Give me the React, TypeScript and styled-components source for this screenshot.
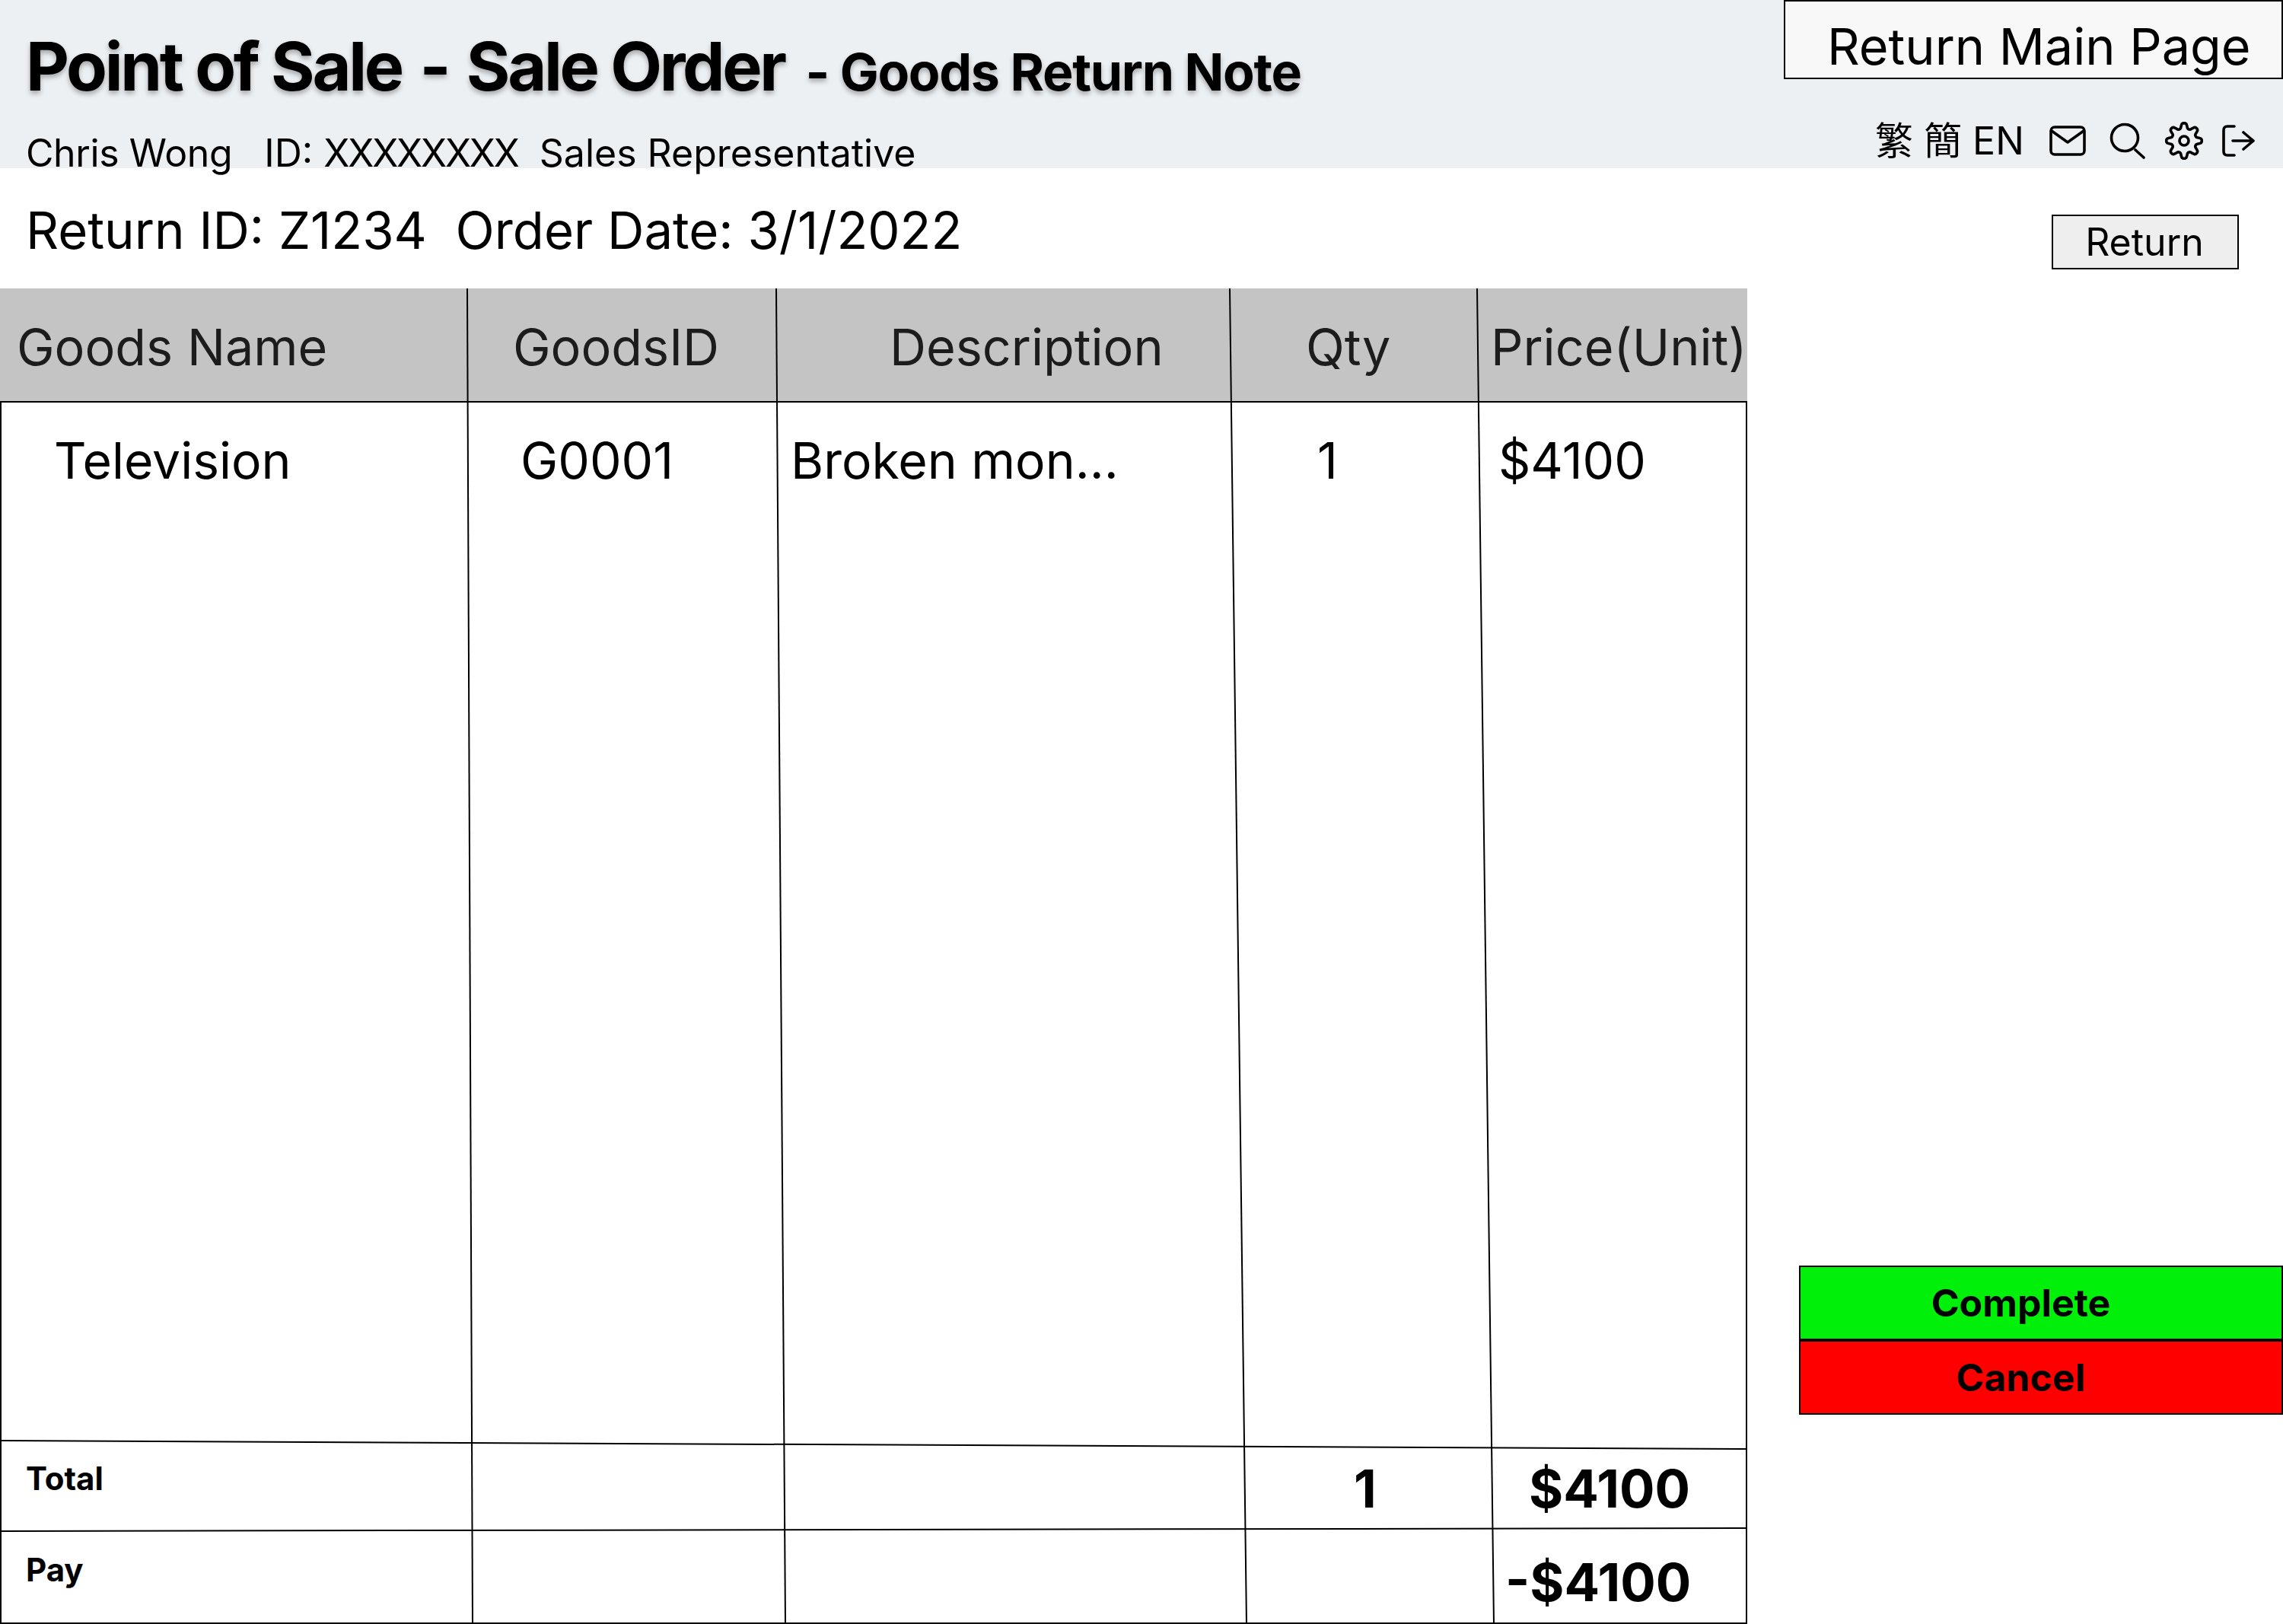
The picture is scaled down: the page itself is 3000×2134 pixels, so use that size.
import React from "react";
import styled, { createGlobalStyle } from "styled-components";

const columns = [
  { key: "name", title: "Goods Name", headIndent: 22, value: "Television", valueIndent: 71 },
  { key: "id", title: "GoodsID", headIndent: 60, value: "G0001", valueIndent: 70 },
  { key: "desc", title: "Description", headIndent: 149, value: "Broken mon...", valueIndent: 19 },
  { key: "qty", title: "Qty", headIndent: 99, value: "1", valueIndent: 114 },
  { key: "price", title: "Price(Unit)", headIndent: 17, value: "$4100", valueIndent: 27 },
];

const summary = [
  { label: "Total", labelTop: 25, qty: "1", qtyIndent: 162, amount: "$4100", amountIndent: 67, top: 22 },
  { label: "Pay", labelTop: 26, qty: "", qtyIndent: 0, amount: "-$4100", amountIndent: 36, top: 26 },
];

// the wireframe's rules are hand drawn and slightly off square
const rules = [
  [614, 0, 621, 1755],
  [1020, 0, 1032, 1755],
  [1616, 0, 1638, 1755],
  [1941, 0, 1963, 1755],
  [1, 149, 1, 1755],
  [2295, 149, 2295, 1755],
  [0, 149, 2296, 149],
  [1, 1514, 2295, 1525],
  [1, 1633, 2295, 1629],
  [0, 1754, 2296, 1754],
];

// eight rounded teeth around the hub
const gearPath = Array.from({ length: 96 }, (_, i) => {
  const angle = (i / 96) * Math.PI * 2;
  const wave = Math.max(-1, Math.min(1, 1.5 * Math.cos(8 * angle)));
  const radius = 19.8 + 3.4 * wave;
  const x = 26 + radius * Math.sin(angle);
  const y = 26 - radius * Math.cos(angle);
  return `${i === 0 ? "M" : "L"}${x.toFixed(2)} ${y.toFixed(2)}`;
}).join("") + "Z";

const App: React.FC = () => (
  <Page>
    <GlobalStyle />
    <Header>
      <TitleBlock>
        <Title>
          Point of Sale <TitleDash>-</TitleDash> Sale Order <small>- Goods Return Note</small>
        </Title>
        <UserLine>
          <UserName>Chris Wong</UserName>
          {"   ID: "}
          <IdCode>XXXXXXXX</IdCode>
          {"  Sales Representative"}
        </UserLine>
      </TitleBlock>
      <HeaderTools>
        <MainPageButton type="button">Return Main Page</MainPageButton>
        <ToolRow>
          <Languages>{"繁 簡 EN"}</Languages>
          <IconSvg $gap={33} width="48" height="40" viewBox="0 0 48 40">
            <rect x="2" y="2" width="44" height="36" rx="5" />
            <path d="M3 7L24 22L45 7" />
          </IconSvg>
          <IconSvg $gap={31} width="47" height="48" viewBox="0 0 47 48">
            <circle cx="20" cy="20" r="17.5" />
            <path d="M34 36L45 46" />
          </IconSvg>
          <IconSvg $gap={25} width="52" height="52" viewBox="0 0 52 52">
            <path d={gearPath} />
            <circle cx="26" cy="26" r="6" />
          </IconSvg>
          <IconSvg $gap={23} width="44" height="42" viewBox="0 0 44 42">
            <path d="M17 2H8Q3 2 3 7V35Q3 40 8 40H17" />
            <path d="M15 21H42M29 10L42 21L29 32" />
          </IconSvg>
        </ToolRow>
      </HeaderTools>
    </Header>

    <OrderBar>
      <OrderInfo>{"Return ID: Z1234  Order Date: 3/1/2022"}</OrderInfo>
      <ReturnButton type="button">Return</ReturnButton>
    </OrderBar>

    <Main>
      <Table>
        <HeadRow>
          {columns.map((col) => (
            <HeadCell key={col.key} $indent={col.headIndent}>{col.title}</HeadCell>
          ))}
        </HeadRow>
        <ItemRow>
          {columns.map((col) => (
            <ItemCell key={col.key} $indent={col.valueIndent}>{col.value}</ItemCell>
          ))}
        </ItemRow>
        {summary.map((row) => (
          <SummaryRow key={row.label}>
            <SummaryLabel $top={row.labelTop}>{row.label}</SummaryLabel>
            <span />
            <span />
            <SummaryValue $indent={row.qtyIndent} $top={row.top}>{row.qty}</SummaryValue>
            <SummaryValue $indent={row.amountIndent} $top={row.top}>{row.amount}</SummaryValue>
          </SummaryRow>
        ))}
        <Rules viewBox="0 0 2296 1755" width="2296" height="1755">
          {rules.map(([x1, y1, x2, y2]) => (
            <line key={`${x1}-${y1}-${x2}-${y2}`} x1={x1} y1={y1} x2={x2} y2={y2} stroke="#000" strokeWidth="2" />
          ))}
        </Rules>
      </Table>
      <SideActions>
        <ActionButton type="button" $color="#00f00a">Complete</ActionButton>
        <ActionButton type="button" $color="#ff0000">Cancel</ActionButton>
      </SideActions>
    </Main>
  </Page>
);

export default App;

const GlobalStyle = createGlobalStyle`
  html, body {
    margin: 0;
    padding: 0;
    background: #ffffff;
  }

  * {
    box-sizing: border-box;
  }
`;

const Page = styled.div`
  width: 3000px;
  height: 2134px;
  overflow: hidden;
  background: #ffffff;
  color: #000000;
  font-family: Inter, "Noto Sans CJK TC", sans-serif;
`;

const Header = styled.header`
  height: 221px;
  display: flex;
  justify-content: space-between;
  background: #edf0f3;
`;

const TitleBlock = styled.div`
  padding: 31px 0 0 34px;
`;

const Title = styled.h1`
  margin: 0;
  font-size: 88px;
  line-height: 112px;
  font-weight: 700;
  letter-spacing: -3.3px;
  white-space: pre;
  text-shadow: 0 4px 6px rgba(0, 0, 0, 0.3);

  small {
    margin-left: 10px;
    font-size: 68px;
    letter-spacing: -1.3px;
  }
`;

const TitleDash = styled.span`
  margin: 0 6px;
`;

const UserLine = styled.div`
  margin-top: 21px;
  font-size: 50px;
  line-height: 60px;
  white-space: pre;
`;

const UserName = styled.span`
  letter-spacing: -0.4px;
`;

const IdCode = styled.span`
  letter-spacing: -2.2px;
`;

const HeaderTools = styled.div`
  width: 656px;
  display: flex;
  flex-direction: column;
`;

const MainPageButton = styled.button`
  width: 656px;
  height: 104px;
  padding: 18px 0 0 55px;
  border: 2px solid #000000;
  background: #f8f8f8;
  color: #000000;
  font: 400 66.5px/1 Inter, sans-serif;
  text-align: left;
`;

const ToolRow = styled.div`
  display: flex;
  align-items: center;
  margin-top: 51px;
  padding-left: 120px;
`;

const Languages = styled.span`
  font-size: 50px;
  line-height: 60px;
  white-space: pre;
`;

const IconSvg = styled.svg<{ $gap: number }>`
  flex: none;
  margin-left: ${({ $gap }) => $gap}px;
  fill: none;
  stroke: #000000;
  stroke-width: 3.6;
  stroke-linecap: round;
  stroke-linejoin: round;
`;

const OrderBar = styled.div`
  height: 158px;
  display: flex;
  justify-content: space-between;
  padding: 0 58px 0 34px;
`;

const OrderInfo = styled.div`
  margin-top: 40px;
  font-size: 67px;
  line-height: 84px;
  white-space: pre;
`;

const ReturnButton = styled.button`
  width: 246px;
  height: 72px;
  margin-top: 61px;
  padding: 0 2px 0 0;
  border: 2px solid #000000;
  background: #eeeeee;
  color: #000000;
  font: 400 50px/1 Inter, sans-serif;
`;

const Main = styled.main`
  display: flex;
  align-items: flex-start;
`;

const Table = styled.section`
  position: relative;
  width: 2296px;
  height: 1755px;
  display: grid;
  grid-template-rows: 149px 1365px 119px 122px;
`;

const Rules = styled.svg`
  position: absolute;
  top: 0;
  left: 0;
  pointer-events: none;
`;

const rowColumns = "614px 406px 597px 325px 354px";

const HeadRow = styled.div`
  display: grid;
  grid-template-columns: ${rowColumns};
  background: #c4c4c4;
`;

const HeadCell = styled.div<{ $indent: number }>`
  padding: 36px 0 0 ${({ $indent }) => $indent}px;
  font-size: 66.5px;
  line-height: 82px;
  color: #1c1c1c;
  white-space: pre;
`;

const ItemRow = styled.div`
  display: grid;
  grid-template-columns: ${rowColumns};
`;

const ItemCell = styled.div<{ $indent: number }>`
  padding: 36px 0 0 ${({ $indent }) => $indent}px;
  font-size: 66px;
  line-height: 82px;
  white-space: pre;
`;

const SummaryRow = styled.div`
  display: grid;
  grid-template-columns: ${rowColumns};
`;

const SummaryLabel = styled.div<{ $top: number }>`
  padding: ${({ $top }) => $top}px 0 0 34px;
  font-size: 42px;
  line-height: 50px;
  font-weight: 700;
`;

const SummaryValue = styled.div<{ $indent: number; $top: number }>`
  padding: ${({ $top }) => $top}px 0 0 ${({ $indent }) => $indent}px;
  font-size: 69px;
  line-height: 82px;
  font-weight: 700;
  white-space: pre;
`;

const SideActions = styled.aside`
  width: 636px;
  margin: 1284px 0 0 68px;
  display: flex;
  flex-direction: column;
`;

const ActionButton = styled.button<{ $color: string }>`
  height: 98px;
  padding: 0 53px 0 0;
  border: 2px solid #000000;
  background: ${({ $color }) => $color};
  color: #000000;
  font: 700 50px/1 Inter, sans-serif;
`;
